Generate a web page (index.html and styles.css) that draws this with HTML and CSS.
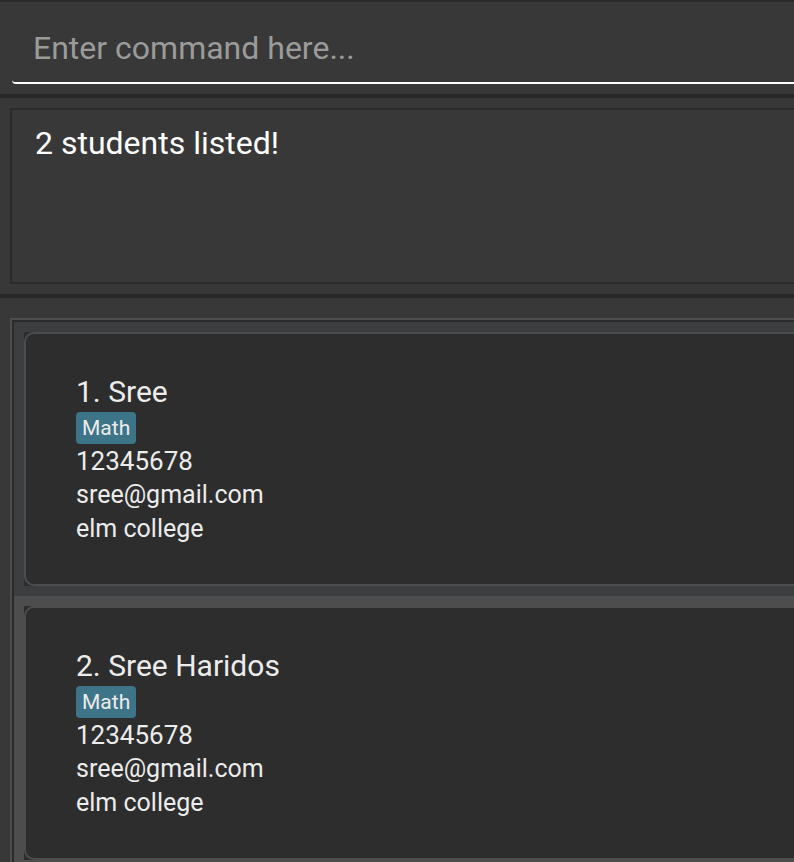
FILE: index.html
```html
<!DOCTYPE html>
<html lang="en">
<head>
<meta charset="utf-8">
<title>Students</title>
<link rel="stylesheet" href="styles.css">
</head>
<body>
<main class="app">
  <form class="command">
    <input class="command-input" type="text" aria-label="Command" placeholder="Enter command here...">
  </form>
  <section class="result">
    <output class="result-box">2 students listed!</output>
  </section>
  <section class="people">
    <ul class="list">
      <li class="cell">
        <article class="card"><div class="card-body">
          <h2 class="name">1. Sree</h2>
          <span class="tag">Math</span>
          <p class="phone">12345678</p>
          <p class="detail">sree@gmail.com</p>
          <p class="detail">elm college</p>
        </div></article>
      </li>
      <li class="cell cell-even">
        <article class="card"><div class="card-body">
          <h2 class="name">2. Sree Haridos</h2>
          <span class="tag">Math</span>
          <p class="phone">12345678</p>
          <p class="detail">sree@gmail.com</p>
          <p class="detail">elm college</p>
        </div></article>
      </li>
    </ul>
  </section>
</main>
</body>
</html>
```
FILE: styles.css
```css
* { box-sizing: border-box; }
body {
  margin: 0;
  background: #383838;
  color: #ececec;
  font-family: Roboto, "Liberation Sans", sans-serif;
}
h2, p, ul { margin: 0; padding: 0; font-weight: 400; }
.app {
  height: 100vh;
  overflow: hidden;
}
.command {
  padding: 10px 0 10px 12px;
  border-top: 2px solid #2b2b2b;
  border-bottom: 4px solid #2a2a2a;
}
.command-input {
  display: block;
  width: 100%;
  height: 72px;
  padding: 2px 20px 0 21px;
  border: 0;
  border-bottom: 2px solid #fff;
  border-bottom-left-radius: 4px;
  outline: 0;
  background: transparent;
  color: #fff;
  font: inherit;
  font-size: 32px;
}
.command-input::placeholder { color: #9b9b9b; opacity: 1; }
.result {
  padding: 10px 0 10px 10px;
  border-bottom: 4px solid #2a2a2a;
}
.result-box {
  display: block;
  min-height: 176px;
  padding: 12px 23px;
  border: 2px solid #2b2b2b;
  border-right: 0;
  color: #fff;
  font-size: 32px;
  line-height: 42px;
}
.people { padding: 20px 0 0 10px; }
.list {
  list-style: none;
  border: 2px solid #4d4d4d;
  border-right: 0;
  background: #2b2b2b;
  padding: 2px 0 2px 2px;
}
.cell {
  padding: 10px 0 10px 10px;
  background: #3c3e3f;
}
.cell-even { background: #4d4d4d; }
.card { background: #2d2d2d; }
.card-body {
  display: flex;
  flex-direction: column;
  align-items: flex-start;
  min-height: 254px;
  padding: 38px 50px;
  border: 2px solid #4d4d4d;
  border-right: 0;
  border-radius: 10px 0 0 10px;
}
.name { font-size: 30px; line-height: 40px; }
.tag {
  padding: 0 6px;
  border-radius: 4px;
  background: #3e7488;
  font-size: 21px;
  line-height: 32px;
}
.phone { font-size: 26px; line-height: 34px; }
.detail { font-size: 25px; line-height: 34px; }
```
